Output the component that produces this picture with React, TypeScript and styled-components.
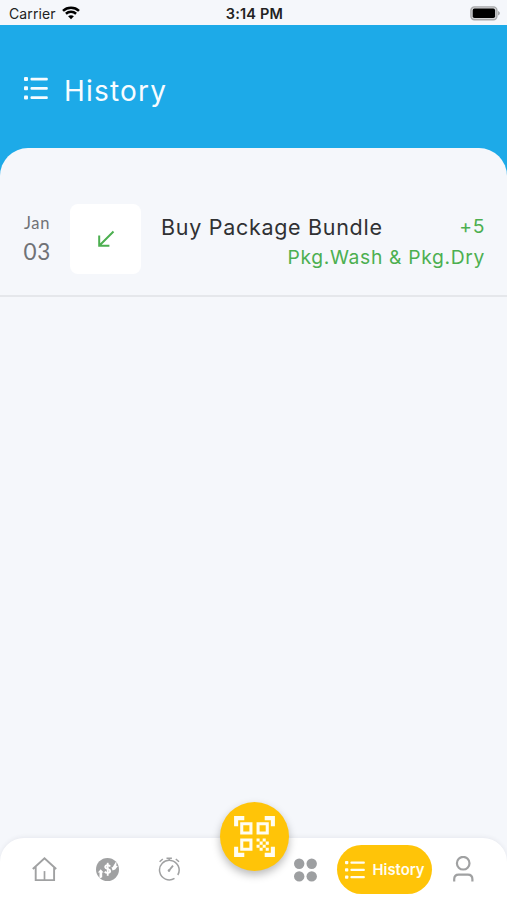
import React from "react";
import styled, { createGlobalStyle } from "styled-components";
import { MdQrCodeScanner } from "react-icons/md";

const GlobalStyle = createGlobalStyle`
  * { box-sizing: border-box; }
  body { margin: 0; background: #f5f7fb; font-family: Inter, "Liberation Sans", sans-serif; }
`;

const Screen = styled.div`
  height: 900px;
  width: 507px;
  display: flex;
  flex-direction: column;
  background: #f5f7fb;
  overflow: hidden;
`;

const StatusBar = styled.div`
  height: 25px;
  flex: none;
  display: grid;
  grid-template-columns: 1fr auto 1fr;
  align-items: center;
  padding: 3px 7px 0 9px;
  color: #222;
  font-size: 14px;
  line-height: 20px;
`;

const Carrier = styled.div`
  display: flex;
  align-items: center;
  gap: 6px;
  letter-spacing: 0.1px;

  svg { margin-bottom: 2px; }
`;

const Clock = styled.div`
  font-weight: 600;
  font-size: 14.5px;
  letter-spacing: 0.2px;
`;

const BatterySlot = styled.div`
  display: flex;
  justify-content: flex-end;
  padding-bottom: 2px;
`;

const Header = styled.header`
  height: 153px;
  flex: none;
  display: flex;
  align-items: flex-start;
  gap: 16px;
  padding: 49px 24px 0;
  background: #1daae8;
  color: #f7fcff;
`;

const HeaderIcon = styled.div`
  display: flex;
  padding-top: 3px;
`;

const Title = styled.h1`
  margin: 0;
  font-size: 28px;
  line-height: 35px;
  font-weight: 400;
  letter-spacing: 1.2px;
`;

const Sheet = styled.main`
  flex: 1;
  margin-top: -30px;
  padding-top: 40px;
  border-radius: 28px 28px 0 0;
  background: #f5f7fb;
`;

const Entry = styled.article`
  height: 109px;
  display: grid;
  grid-template-columns: 46px 71px 1fr;
  padding: 16px 22px 0 24px;
  border-bottom: 2px solid #e5e7eb;
`;

const DateBlock = styled.div`
  display: flex;
  flex-direction: column;
  color: #707276;
  font-family: Lato, sans-serif;
  padding-top: 7px;
`;

const Month = styled.span`
  font-size: 16.5px;
  line-height: 25px;
  letter-spacing: 0.7px;
`;

const Day = styled.span`
  margin-left: -0.5px;
  font-size: 22.5px;
  line-height: 32px;
  letter-spacing: 0.6px;
`;

const Tile = styled.div`
  width: 71px;
  height: 70px;
  display: flex;
  align-items: center;
  justify-content: center;
  border-radius: 8px;
  background: #fff;
`;

const Details = styled.div`
  padding: 9px 0 0 20px;
`;

const Summary = styled.div`
  display: flex;
  justify-content: space-between;
  line-height: 28px;
`;

const Name = styled.span`
  color: #303133;
  font-size: 21.5px;
  letter-spacing: 0.7px;
`;

const Amount = styled.span`
  color: #4caf50;
  font-size: 19.3px;
  letter-spacing: 0.6px;
  line-height: 27px;
`;

const Packages = styled.div`
  color: #4caf50;
  font-size: 19.3px;
  letter-spacing: 0.66px;
  line-height: 33px;
  text-align: right;
`;

const NavBar = styled.nav`
  position: relative;
  height: 62px;
  flex: none;
  display: flex;
  align-items: center;
  padding: 1px 33px 0 32px;
  border-radius: 24px 24px 0 0;
  background: #fff;
  box-shadow: 0 -1px 4px rgba(60, 70, 90, 0.08);
`;

const NavGroup = styled.div<{ $gap: number; $end?: boolean }>`
  display: flex;
  align-items: center;
  gap: ${(p) => p.$gap}px;
  margin-left: ${(p) => (p.$end ? "auto" : "0")};
`;

const NavItem = styled.button`
  display: flex;
  align-items: center;
  justify-content: center;
  padding: 0;
  border: 0;
  background: none;
  color: #a0a1a2;
`;

const ActiveItem = styled(NavItem)`
  width: 95px;
  height: 49px;
  gap: 8px;
  border-radius: 25px;
  background: #ffc408;
  color: #fffdf2;
  font: 600 14.8px/20px Inter, sans-serif;
`;

const ScanButton = styled.button`
  position: absolute;
  left: 219.5px;
  top: -36px;
  width: 69px;
  height: 69px;
  display: flex;
  align-items: center;
  justify-content: center;
  padding: 0;
  border: 0;
  border-radius: 50%;
  background: #ffc408;
  color: #fffdf2;
  box-shadow: 0 4px 8px rgba(0, 0, 0, 0.27);
`;

const ListIcon = ({ width, height }: { width: number; height: number }) => (
  <svg width={width} height={height} viewBox="0 0 24 23" fill="currentColor" preserveAspectRatio="none">
    {[0, 9.3, 18.6].map((y) => (
      <g key={y}>
        <rect x="0" y={y} width="4" height="4" rx="1" />
        <rect x="6.5" y={y + 0.7} width="17.3" height="2.7" rx="1" />
      </g>
    ))}
  </svg>
);

const WifiIcon = () => (
  <svg width="18" height="14" viewBox="0 0 18 14" fill="none" stroke="#000" strokeWidth="2.5">
    <path d="M1 4.8C5.4.6 12.6.6 17 4.8M3.9 7.7c2.9-2.6 7.3-2.6 10.2 0" />
    <path d="M6.1 10.3c1.7-1.5 4.1-1.5 5.8 0L9 13.3z" fill="#000" stroke="none" />
  </svg>
);

const BatteryIcon = () => (
  <svg width="30" height="15" viewBox="0 0 30 15">
    <rect x=".9" y=".9" width="26" height="12.8" rx="3.5" fill="#d5d5d7" stroke="#a7a8aa" strokeWidth="1.4" />
    <rect x="2.7" y="2.6" width="22.4" height="9.4" rx="1.8" fill="#000" />
    <path d="M28 5c2.5.9 2.5 3.6 0 4.5z" fill="#a7a8aa" />
  </svg>
);

const ArrowIcon = () => (
  <svg width="18" height="18" viewBox="0 0 18 18" fill="none" stroke="#4caf50" strokeWidth="2">
    <path d="M16.5 1.5 2.2 15.8M2.2 5.5v10.3h10.2" />
  </svg>
);

const HomeIcon = () => (
  <svg width="26" height="26" viewBox="0 0 26 26" fill="none" stroke="currentColor" strokeWidth="1.9">
    <path d="M.8 12 12.5 1.4 24.2 12M3.7 9.9v13.2h18.4V9.9" />
    <path d="M12.5 23.1v-9" strokeWidth="1.7" />
  </svg>
);

const CoinIcon = () => (
  <svg width="24" height="24" viewBox="0 0 24 24">
    <circle cx="11.5" cy="11.5" r="11.5" fill="currentColor" />
    <path d="M3.5 20.4v-5.8H1.8l2.9-3.4 2.9 3.4H6.2v4.6zM16.6 12.6l-1.2-3.4h1.2l3.8-6.1v4.8h1.5l-2.7 3.6z" fill="#fff" />
    <path d="M14.2 8.4c-1-1.6-5.2-1.6-5 .7.2 2.2 5 1.5 5 4 0 2.2-4.2 2.3-5.4.5" fill="none" stroke="#fff" strokeWidth="1.9" />
    <path d="M11.7 4.8v13" fill="none" stroke="#fff" strokeWidth="1.8" />
  </svg>
);

const TimerIcon = () => (
  <svg width="24" height="26" viewBox="0 0 24 26" fill="none" stroke="currentColor" strokeWidth="1.5">
    <path d="M20.8 18A9.8 9.8 0 1 0 17.5 21.4" />
    <path d="M2.6 4.8 5.8 2M22 4.8 18.8 2M9.5 1.3h5.4M12.2 1.3v2.4" />
    <path d="m11.8 13.8 4.2-5.2" strokeWidth="1.8" />
    <circle cx="12" cy="13.6" r="1.3" fill="currentColor" stroke="none" />
  </svg>
);

const GridIcon = () => (
  <svg width="24" height="24" viewBox="0 0 24 24" fill="#9d9fa1">
    <circle cx="6.2" cy="5.7" r="5.2" />
    <circle cx="18.7" cy="5.7" r="5.2" />
    <circle cx="6.2" cy="18.4" r="5.2" />
    <circle cx="18.7" cy="18.4" r="5.2" />
  </svg>
);

const UserIcon = () => (
  <svg width="22" height="28" viewBox="0 0 22 28" fill="none" stroke="currentColor" strokeWidth="2.2">
    <circle cx="11.2" cy="7.2" r="6.3" />
    <path d="M2.2 25.5v-2.3c0-2.8 1.7-4.6 4.5-4.6h9.2c2.8 0 4.5 1.8 4.5 4.6v2.3" />
  </svg>
);

export default function App() {
  return (
    <Screen>
      <GlobalStyle />
      <StatusBar>
        <Carrier>Carrier <WifiIcon /></Carrier>
        <Clock>3:14 PM</Clock>
        <BatterySlot><BatteryIcon /></BatterySlot>
      </StatusBar>
      <Header>
        <HeaderIcon><ListIcon width={24} height={23} /></HeaderIcon>
        <Title>History</Title>
      </Header>
      <Sheet>
        <Entry>
          <DateBlock>
            <Month>Jan</Month>
            <Day>03</Day>
          </DateBlock>
          <Tile><ArrowIcon /></Tile>
          <Details>
            <Summary>
              <Name>Buy Package Bundle</Name>
              <Amount>+5</Amount>
            </Summary>
            <Packages>Pkg.Wash &amp; Pkg.Dry</Packages>
          </Details>
        </Entry>
      </Sheet>
      <NavBar>
        <NavGroup $gap={37.5}>
          <NavItem aria-label="Home"><HomeIcon /></NavItem>
          <NavItem aria-label="Top up"><CoinIcon /></NavItem>
          <NavItem aria-label="Timer"><TimerIcon /></NavItem>
        </NavGroup>
        <NavGroup $gap={20} $end>
          <NavItem aria-label="Services"><GridIcon /></NavItem>
          <ActiveItem><ListIcon width={20} height={18} />History</ActiveItem>
          <NavItem aria-label="Profile"><UserIcon /></NavItem>
        </NavGroup>
        <ScanButton aria-label="Scan"><MdQrCodeScanner size={49} /></ScanButton>
      </NavBar>
    </Screen>
  );
}
